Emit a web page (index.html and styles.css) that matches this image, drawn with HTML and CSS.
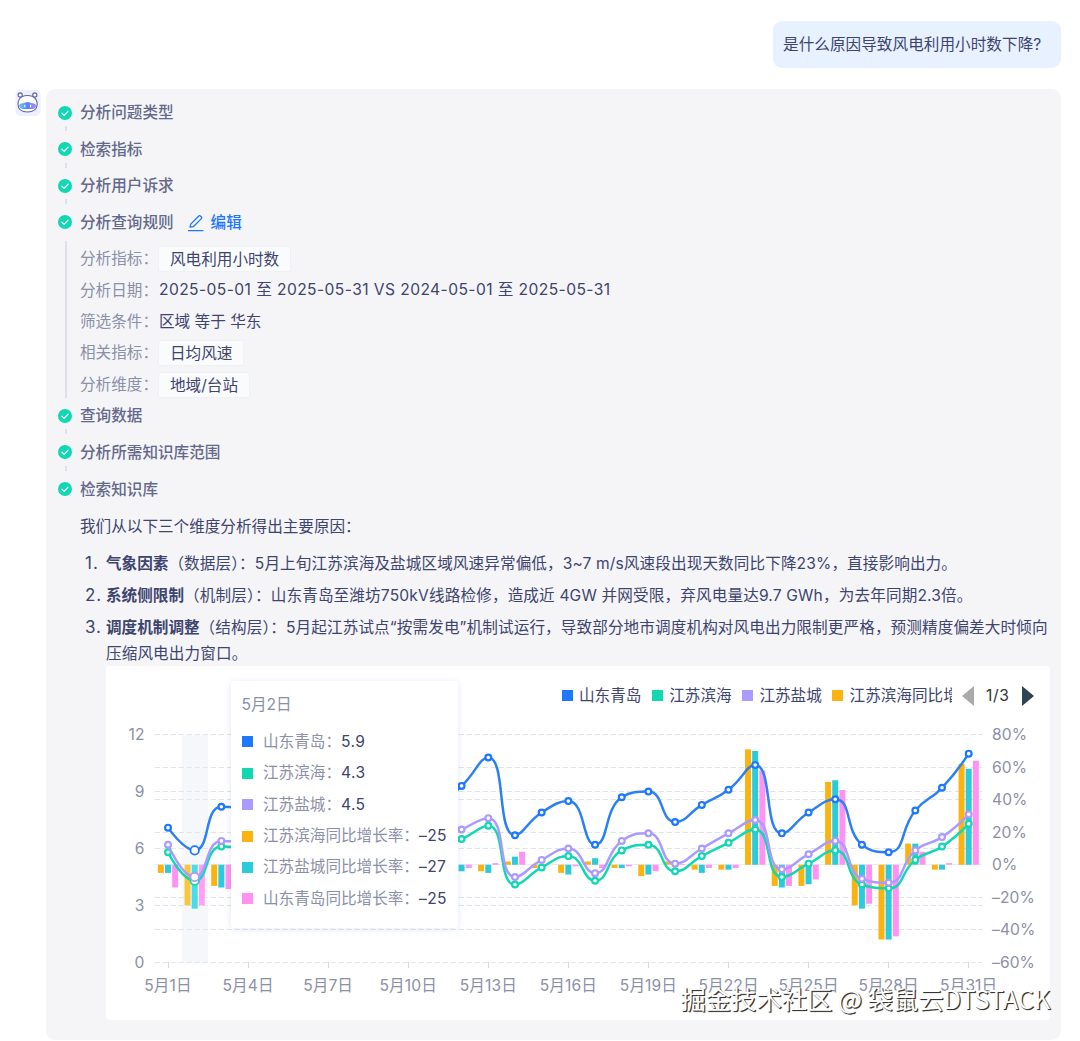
FILE: index.html
```html
<!DOCTYPE html>
<html lang="zh-CN">
<head>
<meta charset="utf-8">
<title>风电利用小时数归因分析</title>
<link rel="stylesheet" href="styles.css">
</head>
<body>
<svg class="defs" width="0" height="0">
  <symbol id="check" viewBox="0 0 14 14"><circle cx="7" cy="7" r="7" fill="#11d7b2"/><path d="M3.9 7.2l2.2 2.1 4-4.2" fill="none" stroke="#fff" stroke-width="1.2" stroke-linecap="round" stroke-linejoin="round"/></symbol>
</svg>
<main class="chat">
  <div class="question">是什么原因导致风电利用小时数下降?</div>
  <div class="reply">
    <svg class="avatar" viewBox="0 0 26 28">
      <defs><linearGradient id="visor" x1="0" x2="1" y1="0" y2="0"><stop offset="0" stop-color="#67c7f8"/><stop offset=".5" stop-color="#5b80f5"/><stop offset="1" stop-color="#ad8df8"/></linearGradient></defs>
      <rect x="0.5" y="1" width="25" height="26" rx="5" fill="#eeefff"/>
      <circle cx="5.2" cy="6" r="2.1" fill="#f4f4ff" stroke="#62669b" stroke-width="1.1"/>
      <circle cx="19.8" cy="6" r="2.1" fill="#f4f4ff" stroke="#62669b" stroke-width="1.1"/>
      <path d="M7.3 7.4Q12.5 5.6 17.8 7.4Q22.4 10 22.2 15.6Q21.8 23 12.5 23Q3.3 23 3 15.6Q2.9 10 7.3 7.4Z" fill="#fff" stroke="#62669b" stroke-width="1.1"/>
      <path d="M4.2 15.5q1.7-1.5 4.8-1.5 3.6-2 7.2 0 3.1 0 4.8 1.5v2.5q-1 2-4 2H8.2q-3 0-4-2z" fill="url(#visor)"/>
      <path d="M9.8 15.8v2.4M15.6 15.8v2.4" stroke="#fff" stroke-width="1.1"/>
    </svg>
    <section class="panel">
      <div class="step"><svg class="tick"><use href="#check"/></svg>分析问题类型</div>
      <div class="step"><svg class="tick"><use href="#check"/></svg>检索指标</div>
      <div class="step"><svg class="tick"><use href="#check"/></svg>分析用户诉求</div>
      <div class="step open"><svg class="tick"><use href="#check"/></svg>分析查询规则
        <a class="edit"><svg viewBox="0 0 18 18"><path d="M1 16.6h15.5M3.1 13.2l.6-3.1L11.8 2q.8-.8 1.6 0l1 1q.8.8 0 1.6l-8.1 8.1z" fill="none" stroke="#1d78ff" stroke-width="1.3" stroke-linejoin="round"/></svg>编辑</a>
      </div>
      <div class="rules">
        <div class="rule"><span class="name">分析指标：</span><span class="tag">风电利用小时数</span></div>
        <div class="rule"><span class="name">分析日期：</span><span class="plain dates">2025-05-01 至 2025-05-31 VS 2024-05-01 至 2025-05-31</span></div>
        <div class="rule"><span class="name">筛选条件：</span><span class="plain">区域 等于 华东</span></div>
        <div class="rule"><span class="name">相关指标：</span><span class="tag">日均风速</span></div>
        <div class="rule"><span class="name">分析维度：</span><span class="tag">地域/台站</span></div>
      </div>
      <div class="step"><svg class="tick"><use href="#check"/></svg>查询数据</div>
      <div class="step"><svg class="tick"><use href="#check"/></svg>分析所需知识库范围</div>
      <div class="step last"><svg class="tick"><use href="#check"/></svg>检索知识库</div>
      <div class="answer">
        <p class="lead">我们从以下三个维度分析得出主要原因：</p>
        <div class="reason"><span class="num">1.</span><p><b>气象因素</b>（数据层）：5月上旬江苏滨海及盐城区域风速异常偏低，3~7 m/s风速段出现天数同比下降23%，直接影响出力。</p></div>
        <div class="reason"><span class="num">2.</span><p class="wide"><b>系统侧限制</b>（机制层）：山东青岛至潍坊750kV线路检修，造成近 4GW 并网受限，弃风电量达9.7 GWh，为去年同期2.3倍。</p></div>
        <div class="reason"><span class="num">3.</span><p><b>调度机制调整</b>（结构层）：5月起江苏试点“按需发电”机制试运行，导致部分地市调度机构对风电出力限制更严格，预测精度偏差大时倾向<br>压缩风电出力窗口。</p></div>
        <div class="card">
          <svg class="chart" id="chart" viewBox="106 666 944 354" width="944" height="354"></svg>
          <div class="legend">
            <span class="item"><i class="sw blue"></i>山东青岛</span>
            <span class="item"><i class="sw green"></i>江苏滨海</span>
            <span class="item"><i class="sw purple"></i>江苏盐城</span>
            <span class="item cut"><i class="sw orange"></i>江苏滨海同比增长率</span>
            <svg class="arrow" viewBox="0 0 12 20"><path d="M12 0v20L0 10z" fill="#aaa"/></svg>
            <span class="page">1/3</span>
            <svg class="arrow" viewBox="0 0 12 20"><path d="M0 0v20l12-10z" fill="#2f4554"/></svg>
          </div>
          <div class="tooltip">
            <div class="day">5月2日</div>
            <div class="line"><i class="sw blue"></i>山东青岛：<b>5.9</b></div>
            <div class="line"><i class="sw green"></i>江苏滨海：<b>4.3</b></div>
            <div class="line"><i class="sw purple"></i>江苏盐城：<b>4.5</b></div>
            <div class="line"><i class="sw orange"></i>江苏滨海同比增长率：<b>–25</b></div>
            <div class="line"><i class="sw cyan"></i>江苏盐城同比增长率：<b>–27</b></div>
            <div class="line"><i class="sw pink"></i>山东青岛同比增长率：<b>–25</b></div>
          </div>
        </div>
      </div>
    </section>
  </div>
  <div class="watermark">掘金技术社区 @ 袋鼠云DTSTACK</div>
</main>
<script src="chart.js"></script>
</body>
</html>
```
FILE: styles.css
```css
* { box-sizing: border-box; }
body {
  margin: 0;
  background: #fff;
  color: #3d446e;
  font: 15.6px/26px Inter, "Noto Sans CJK SC", sans-serif;
}
p { margin: 0; }
.defs { position: absolute; }
.chat {
  position: relative;
  width: 1080px;
  height: 1041px;
  padding: 21px 19px 0 15px;
  display: flex;
  flex-direction: column;
  overflow: hidden;
}
.question {
  align-self: flex-end;
  width: 288px;
  height: 47px;
  padding: 0 10px;
  line-height: 48px;
  letter-spacing: .05px;
  border-radius: 9px;
  background: #e8f1ff;
  white-space: nowrap;
}
.reply { display: flex; gap: 5px; margin-top: 21px; }
.avatar { flex: none; width: 26px; height: 28px; }
.panel {
  width: 1015px;
  height: 951px;
  padding: 6px 11px 0 12px;
  border-radius: 9px;
  background: #f5f5f8;
}
.step {
  position: relative;
  display: flex;
  height: 36.6px;
  line-height: 36.6px;
  font-weight: 500;
  color: #64698b;
}
.tick { width: 14px; height: 14px; margin: 10.5px 8px 0 0; flex: none; overflow: visible; }
.step::after {
  content: "";
  position: absolute;
  left: 7px;
  top: 31px;
  width: 1.5px;
  height: 5px;
  background: #dfe0e8;
}
.step.last::after, .step.open::after { display: none; }
.edit { display: flex; margin-left: 13px; color: #1d78ff; }
.edit svg { width: 18px; height: 18px; margin: 9px 6px 0 0; }
.rules {
  display: flex;
  flex-direction: column;
  height: 157px;
  margin-left: 7px;
  padding-left: 13px;
  border-left: 2px solid #dfe0e8;
}
.rule { display: flex; align-items: center; flex: none; height: 31.4px; padding-top: 4.5px; white-space: nowrap; }
.name { color: #8b8fa8; width: 79px; }
.plain { margin-bottom: 1px; }
.dates { letter-spacing: .42px; }
.tag {
  height: 26px;
  line-height: 25px;
  margin-left: -1px;
  padding: 0 10.5px 0 11px;
  border: 1px solid #f0f1f5;
  border-radius: 2px;
  background: #fafbfd;
}
.answer { padding: 5.5px 0 0 22px; }
.lead { margin-bottom: 11.5px; }
.reason { display: flex; white-space: nowrap; margin-bottom: 6px; letter-spacing: .11px; }
.reason:nth-child(4) { margin-bottom: -1px; }
.reason .wide { letter-spacing: .15px; }
.reason b { font-weight: 700; letter-spacing: 0; }
.num { width: 26px; padding-left: 5px; flex: none; font-size: 17px; line-height: 25px; letter-spacing: 1px; }
.card { position: relative; width: 944px; height: 354px; margin-left: 26px; background: #fff; border-radius: 4px; }
.chart { display: block; }
.chart text { fill: #8b8fa8; font-size: 15.6px; letter-spacing: .1px; }
.legend {
  position: absolute;
  left: 455.5px;
  top: 16.6px;
  display: flex;
  align-items: center;
  white-space: nowrap;
}
.item { display: flex; align-items: center; width: 90.2px; }
.item.cut { width: 120px; overflow: hidden; }
.sw { flex: none; width: 11px; height: 11px; margin-right: 6.5px; }
.blue { background: #1d78ff; }
.green { background: #11d7b2; }
.purple { background: #ab9aff; }
.orange { background: #fbb310; }
.cyan { background: #2bcbdb; }
.pink { background: #ff92f2; }
.arrow { width: 12px; height: 20px; margin-left: 10px; }
.page { margin-left: 12px; width: 26px; color: #333; letter-spacing: .6px; }
.page + .arrow { margin-left: 10px; }
.tooltip {
  position: absolute;
  left: 125px;
  top: 15px;
  width: 227px;
  height: 247px;
  padding: 11px 10.5px;
  background: #fff;
  border-radius: 3px;
  box-shadow: 0 1px 6px rgba(80, 100, 210, .16);
  color: #8b8fa8;
  white-space: nowrap;
}
.day { height: 34px; }
.line { display: flex; align-items: center; height: 31.4px; }
.line .sw { margin-right: 10.5px; }
.line b { font-weight: 400; color: #3d446e; letter-spacing: .4px; }
.watermark {
  position: absolute;
  left: 680.5px;
  top: 979.5px;
  font: 25.3px/36px "Noto Sans CJK SC", sans-serif;
  color: #fff;
  white-space: nowrap;
  text-shadow: 1px 1px 1px #333, 1px 1px 0 #444;
}
```
FILE: chart.js
```javascript
const left = 154.7, step = 26.69, top0 = 734.7, bottom = 962.3;
const dayX = d => 168 + (d - 1) * step;
const speedY = v => bottom - v * (bottom - top0) / 12;
const rateY = v => bottom - (v + 60) * (bottom - top0) / 140;

// daily mean values
const qingdao = [7.1, 5.9, 8.2, 8.1, 7.6, 8.0, 8.4, 7.7, 8.1, 8.5, 8.2, 9.3, 10.8, 6.7, 7.9, 8.5, 6.2, 8.7, 9.0, 7.4, 8.3, 9.1, 10.4, 6.8, 7.9, 8.6, 6.2, 5.8, 8.0, 9.2, 11.0];
const yancheng = [6.2, 4.5, 6.4, 6.3, 5.9, 6.1, 6.4, 5.8, 6.2, 6.4, 6.3, 7.0, 7.6, 4.5, 5.4, 6.0, 4.7, 6.4, 6.8, 5.2, 6.0, 6.8, 7.5, 4.9, 5.7, 6.4, 4.4, 4.2, 5.9, 6.6, 7.8];
const binhai = [5.8, 4.3, 6.1, 6.0, 5.5, 5.8, 6.1, 5.5, 5.9, 6.1, 6.0, 6.5, 7.2, 4.1, 5.0, 5.6, 4.3, 5.9, 6.2, 4.8, 5.6, 6.3, 7.0, 4.5, 5.2, 5.9, 4.1, 3.9, 5.4, 6.1, 7.3];

// year-on-year rates by day: [binhai, yancheng, qingdao]
const rates = {
  1: [-5, -5, -14], 2: [-25, -27, -25], 3: [-13, -14, -15],
  12: [-4, -4, -2], 13: [-4, -5, 1], 14: [2, 5, 8], 15: [-2, 0, 0],
  16: [-5, -6, -1], 17: [2, 4, -2], 18: [-2, -2, -1], 19: [-7, -6, -4],
  20: [2, 0, 0.4], 21: [-3, -5, -2], 22: [-3, -3, -2], 23: [71, 70, 58],
  24: [-13, -14, -13], 25: [-13, -12, -9], 26: [51, 52, 46],
  27: [-25, -27, -24], 28: [-46, -46, -44], 29: [13, 13, 8],
  30: [-3, -3, 1], 31: [62, 59, 64]
};

const clamp = (v, a, b) => Math.max(Math.min(a, b), Math.min(Math.max(a, b), v));

function smoothPath(pts) {
  let d = `M${pts[0]}`;
  let c0 = pts[0];
  for (let i = 1; i < pts.length; i++) {
    const p = pts[i], a = pts[i - 1], n = pts[i + 1];
    let c1 = p, next = p;
    if (n) {
      const lp = Math.hypot(p[0] - a[0], p[1] - a[1]);
      const ln = Math.hypot(n[0] - p[0], n[1] - p[1]);
      const r = ln / (ln + lp);
      next = [0, 1].map(k => clamp(p[k] + (n[k] - a[k]) * 0.5 * r, p[k], n[k]));
      c1 = [0, 1].map(k => clamp(p[k] - (next[k] - p[k]) * lp / ln, a[k], p[k]));
      next = [0, 1].map(k => p[k] + (p[k] - c1[k]) * ln / lp);
    }
    d += `C${c0} ${c1} ${p}`;
    c0 = next;
  }
  return d;
}

let out = `<rect x="182" y="${top0}" width="26" height="${bottom - top0}" fill="#f5f7fb"/>`;
const grid = y => `<path d="M${left} ${Math.floor(y) + 0.5}H982" stroke="#dde4ec" stroke-dasharray="5 3"/>`;
for (const v of [0, 3, 6, 9, 12]) {
  const y = speedY(v);
  out += grid(y);
  out += `<text x="144.5" y="${y + 5.6}" text-anchor="end">${v}</text>`;
}
for (const v of [-60, -40, -20, 0, 20, 40, 60, 80]) {
  const y = rateY(v);
  if (v > -60 && v < 80) out += v ? grid(y) : `<path d="M${left} 864.5H982" stroke="#e8ebf2"/>`;
  out += `<text class="rate" x="992" y="${y + 5.4}">${String(v).replace('-', '–')}%</text>`;
}
for (let d = 1; d <= 31; d += 3) {
  out += `<path d="M${Math.floor(dayX(d)) + 0.5} 962v6" stroke="#d5d9e2"/>`;
  out += `<text x="${dayX(d)}" y="991" text-anchor="middle">5月${d}日</text>`;
}
const barColors = ['#fbb310', '#2bcbdb', '#ff92f2'];
const hoverColors = ['#f8c83a', '#48dcec', '#ff9ff5'];
for (const [d, vals] of Object.entries(rates)) {
  vals.forEach((v, i) => {
    const y = rateY(v), z = rateY(0);
    out += `<rect x="${dayX(+d) - 3 + (i - 1) * 7.15}" y="${Math.min(y, z)}" width="6" height="${Math.abs(y - z)}" fill="${(d === '2' ? hoverColors : barColors)[i]}"/>`;
  });
}
for (const [data, color, dot] of [[qingdao, '#2b80f2', '#1d78ff'], [binhai, '#11d7b2', '#11d7b2'], [yancheng, '#ab9aff', '#ab9aff']]) {
  const pts = data.map((v, i) => [dayX(i + 1), speedY(v)]);
  out += `<path d="${smoothPath(pts)}" fill="none" stroke="${color}" stroke-width="2.5"/>`;
  pts.forEach((p, i) => {
    out += `<circle cx="${p[0]}" cy="${p[1]}" r="${i === 1 ? 4.2 : 2.9}" fill="#fff" stroke="${dot}" stroke-width="${i === 1 ? 1.8 : 2.2}"/>`;
  });
}
document.getElementById('chart').innerHTML = out;
```
